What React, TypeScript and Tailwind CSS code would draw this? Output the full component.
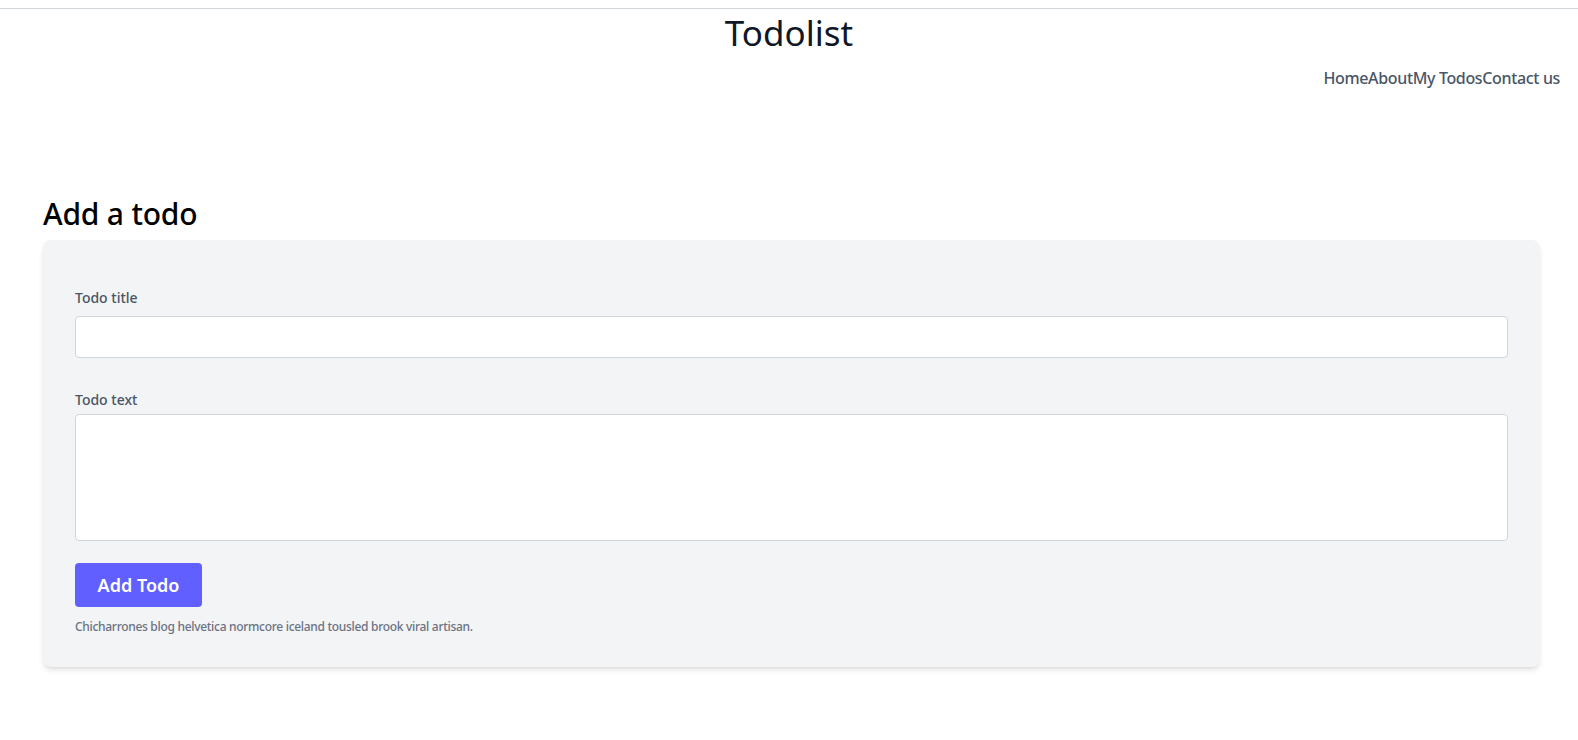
export default function App() {
    return (
        <div className="min-h-screen bg-white text-gray-900 font-['Noto_Sans',sans-serif]">
            {/* Header */}
            <div className="pt-2">
                <div className="border-t border-gray-300"></div>
                <h1 className="text-center text-[35px] leading-[44px] text-gray-900 mt-0.5">Todolist</h1>
                <nav className="flex justify-end pr-[18px] mt-[11px] text-gray-600 text-base font-medium tracking-[-0.35px]">
                    <a href="#">Home</a>
                    <a href="#">About</a>
                    <a href="#">My Todos</a>
                    <a href="#">Contact us</a>
                </nav>
            </div>

            {/* Add todo form */}
            <div className="pl-[43px] pr-[38px] mt-[106px]">
                <h2 className="text-[30px] leading-[36px] text-black font-medium tracking-[-0.2px] mb-2">Add a todo</h2>
                <div className="bg-gray-100 rounded-lg shadow-md px-8 pt-12 pb-8">
                    <label className="block text-sm text-gray-600 font-medium mb-2">Todo title</label>
                    <input type="text" className="w-full h-[42px] bg-white border border-gray-300 rounded px-3" />

                    <label className="block text-sm text-gray-600 font-medium mt-8 mb-1">Todo text</label>
                    <textarea className="block w-full h-[127px] bg-white border border-gray-300 rounded px-3 py-2 resize-none"></textarea>

                    <button className="mt-[22px] w-[127px] h-[44px] bg-indigo-500 text-white text-lg font-semibold rounded">
                        Add Todo
                    </button>
                    <p className="text-xs text-gray-500 font-medium tracking-[-0.3px] mt-3">
                        Chicharrones blog helvetica normcore iceland tousled brook viral artisan.
                    </p>
                </div>
            </div>
        </div>
    );
}
